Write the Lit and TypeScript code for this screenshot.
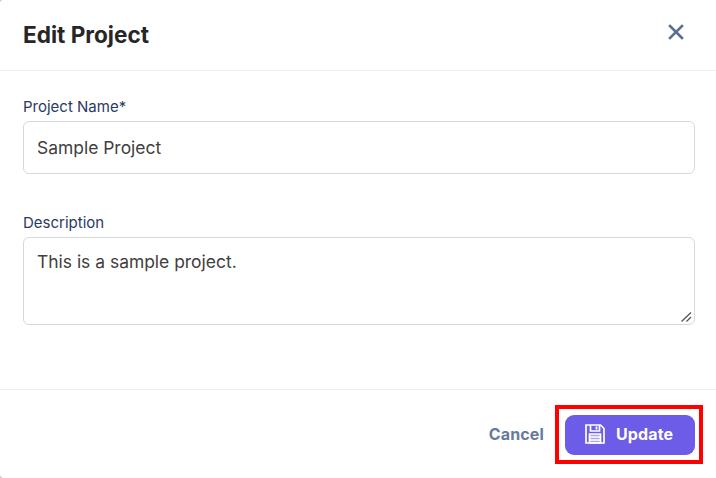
import { LitElement, html, css } from "lit";
import { customElement } from "lit/decorators.js";

@customElement("app-root")
export class AppRoot extends LitElement {
  static styles = css`
    :host {
      display: block;
      width: 716px;
      height: 478px;
      font-family: Inter, "Liberation Sans", sans-serif;
      background: #c4c4c4;
    }
    .modal {
      box-sizing: border-box;
      width: 716px;
      height: 478px;
      background: #fff;
      border-radius: 3px 0 0 4px;
      display: flex;
      flex-direction: column;
    }
    .head {
      box-sizing: border-box;
      height: 71px;
      flex: none;
      display: flex;
      align-items: center;
      justify-content: space-between;
      padding: 0 29px 0 23px;
      border-bottom: 1px solid #eceef4;
    }
    h2 {
      margin: 0;
      font-size: 22.6px;
      line-height: 28px;
      font-weight: 700;
      color: #262626;
    }
    .close {
      display: block;
      width: 22px;
      height: 22px;
      margin-bottom: 7px;
      color: #5b6f94;
    }
    .body {
      flex: 1;
      box-sizing: border-box;
      padding: 27px 21px 0 23px;
      display: flex;
      flex-direction: column;
      gap: 40px;
    }
    .field {
      display: flex;
      flex-direction: column;
      gap: 5px;
    }
    label {
      font-size: 15px;
      line-height: 18px;
      color: #2a3a63;
    }
    .box {
      position: relative;
    }
    input,
    textarea {
      box-sizing: border-box;
      width: 100%;
      margin: 0;
      border: 1px solid #d6d8dc;
      border-radius: 6px;
      background: #fff;
      padding: 0 13px;
      font: 400 17.45px/24px Inter, "Liberation Sans", sans-serif;
      color: #404040;
      outline: none;
      display: block;
    }
    input {
      height: 53px;
    }
    textarea {
      height: 88px;
      padding-top: 12px;
      padding-bottom: 12px;
      resize: none;
    }
    .grip {
      position: absolute;
      right: 3px;
      bottom: 3px;
      width: 11px;
      height: 10px;
      display: block;
      pointer-events: none;
    }
    .foot {
      box-sizing: border-box;
      height: 89px;
      flex: none;
      border-top: 1px solid #eceef4;
      display: flex;
      align-items: flex-start;
      justify-content: flex-end;
      padding: 25px 21px 0 0;
      gap: 21px;
    }
    .cancel {
      height: 40px;
      padding: 0 0 2px;
      border: 0;
      background: none;
      font: 700 16px/38px Inter, "Liberation Sans", sans-serif;
      letter-spacing: 0.15px;
      color: #687a9c;
    }
    .update {
      position: relative;
      box-sizing: border-box;
      width: 130px;
      height: 40px;
      border: 0;
      border-radius: 9px;
      background: #6c5ce7;
      color: #fff;
      font: 700 16px/38px Inter, "Liberation Sans", sans-serif;
      letter-spacing: 0.15px;
      display: flex;
      align-items: center;
      gap: 11px;
      padding: 0 0 2px 20px;
    }
    .update svg {
      display: block;
      width: 20px;
      height: 20px;
      flex: none;
    }
    .mark {
      position: absolute;
      left: -10px;
      top: -10px;
      width: 148px;
      height: 59px;
      box-sizing: border-box;
      border: 4px solid #ff0000;
      pointer-events: none;
    }
  `;

  render() {
    return html`
      <div class="modal">
        <div class="head">
          <h2>Edit Project</h2>
          <svg class="close" viewBox="0 0 22 22" fill="none" stroke="currentColor" stroke-width="2.6" stroke-linecap="square">
            <path d="M5 5 L17 17 M17 5 L5 17" />
          </svg>
        </div>
        <div class="body">
          <div class="field">
            <label for="n">Project Name*</label>
            <div class="box"><input id="n" .value=${"Sample Project"} /></div>
          </div>
          <div class="field">
            <label for="d">Description</label>
            <div class="box">
              <textarea id="d" .value=${"This is a sample project."}></textarea>
              <svg class="grip" viewBox="0 0 11 10" fill="none" stroke="#555" stroke-width="1.3">
                <path d="M0.5 9.5 L10 0.5 M5.5 9.5 L10 5" />
              </svg>
            </div>
          </div>
        </div>
        <div class="foot">
          <button class="cancel">Cancel</button>
          <button class="update">
            <svg viewBox="0 0 20 20" fill="none" stroke="#fff" stroke-width="1.7">
              <path d="M1 1 H15.5 L19 4.5 V19 H1 Z" />
              <path d="M5.5 1 V7 H14.5 V1" />
              <path d="M11.5 2.5 V5.5" stroke-width="1.8" />
              <path d="M4.5 10 H15.5 V19 H4.5 Z" fill="rgba(255,255,255,.45)" />
              <path d="M4.5 13 H15.5 M4.5 16 H15.5" stroke-width="1.3" />
            </svg>
            Update
            <span class="mark"></span>
          </button>
        </div>
      </div>
    `;
  }
}
